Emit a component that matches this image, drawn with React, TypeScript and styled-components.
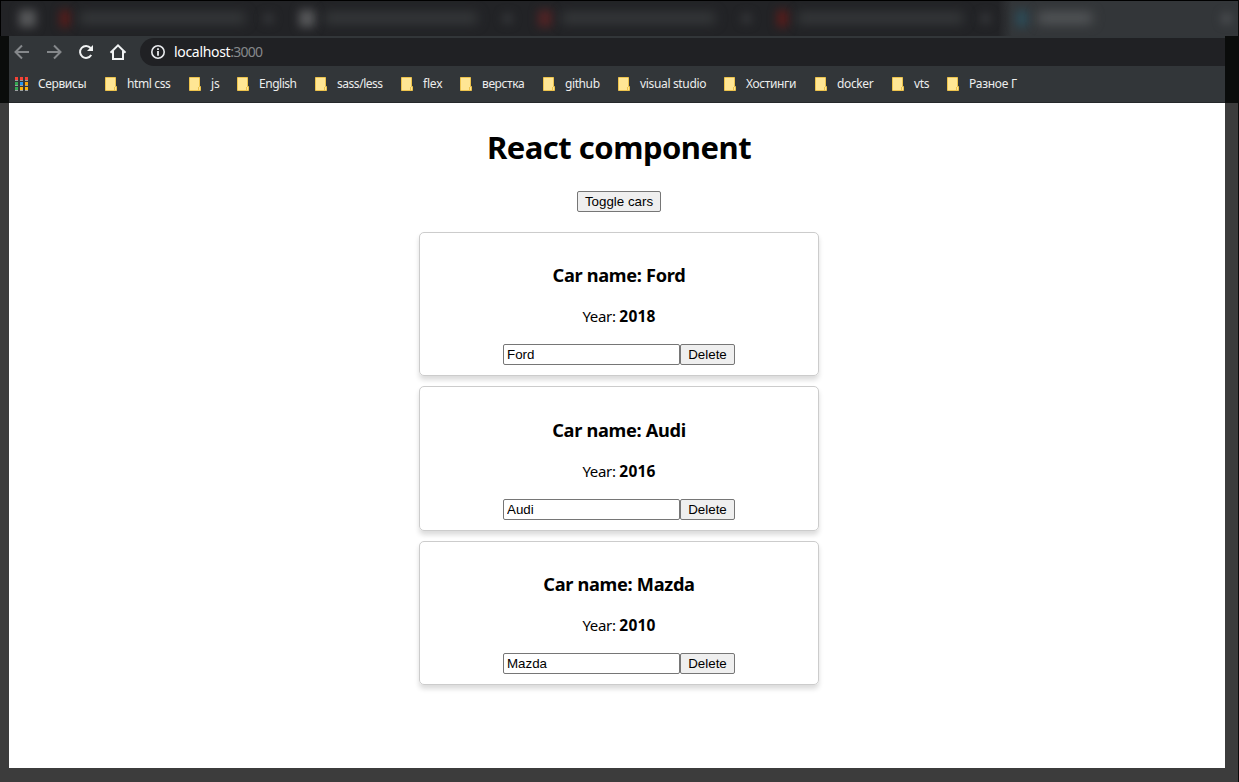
import React, { useState } from 'react';
import styled, { createGlobalStyle } from 'styled-components';

const Global = createGlobalStyle`
  * { box-sizing: border-box; }
  html, body { margin: 0; padding: 0; overflow: hidden; }
  body { background: #3b3b3b; }
`;

const Screen = styled.div`
  width: 1239px;
  height: 782px;
  display: flex;
  flex-direction: column;
  background: #3c3c3c;
  border-right: 1px solid #0a0a0a;
  overflow: hidden;
`;

const TabStrip = styled.div`
  height: 36px;
  flex: none;
  display: flex;
  background: #222326;
  border-top: 1px solid #000;
  border-left: 1px solid #000;
  overflow: hidden;
  margin-right: -1px;
`;

const Tab = styled.div<{ $width: number; $active?: boolean }>`
  width: ${p => p.$width}px;
  flex: none;
  height: 36px;
  display: flex;
  align-items: center;
  padding: 0 8px 2px 18px;
  background: ${p => (p.$active ? 'linear-gradient(90deg, #222326 0, #333639 14px)' : 'transparent')};
`;

const Favicon = styled.div<{ $color: string; $width: number }>`
  width: ${p => p.$width}px;
  height: 17px;
  flex: none;
  background: ${p => p.$color};
  filter: blur(5px);
`;

const TitleBlur = styled.div<{ $width: number; $color: string }>`
  width: ${p => p.$width}px;
  height: 10px;
  flex: none;
  margin-left: 10px;
  background: ${p => p.$color};
  filter: blur(6px);
`;

const CloseBlur = styled.div<{ $active?: boolean }>`
  width: 9px;
  height: 9px;
  margin-left: auto;
  background: ${p => (p.$active ? '#515457' : '#383a3d')};
  filter: blur(5px);
`;

const ChromeRow = styled.div`
  flex: none;
  height: 67px;
  display: flex;
  background: #0a0c0b;
  padding: 0 13px 0 9px;
`;

const Chrome = styled.div`
  flex: 1;
  min-width: 0;
  background: #323639;
  border-bottom: 1px solid #25282b;
  font-family: 'Noto Sans', 'Open Sans', sans-serif;
`;

const Toolbar = styled.div`
  height: 32px;
  display: flex;
  align-items: center;
  padding-left: 3px;
`;

const NavButton = styled.span`
  width: 32px;
  height: 20px;
  display: flex;
  align-items: center;
  flex: none;
`;

const AddressBar = styled.div`
  flex: 1;
  height: 28px;
  border-radius: 14px 0 0 14px;
  background: #202124;
  display: flex;
  align-items: center;
  padding-left: 10px;
  color: #fff;
  font-size: 14px;
`;

const Url = styled.span`
  margin-left: 8px;
  line-height: 20px;
  letter-spacing: -0.32px;
`;

const Port = styled.span`
  color: #85888b;
  letter-spacing: -0.75px;
`;

const Bookmarks = styled.div`
  height: 32px;
  display: flex;
  align-items: center;
  padding-left: 6px;
`;

const Bookmark = styled.div<{ $width: number }>`
  width: ${p => p.$width}px;
  flex: none;
  display: flex;
  align-items: center;
  gap: 10px;
  color: #eceded;
  font-size: 12px;
  line-height: 18px;
  white-space: nowrap;
`;

const BookmarkText = styled.span<{ $spacing: number }>`
  letter-spacing: ${p => p.$spacing}px;
`;

const Page = styled.main`
  flex: none;
  width: 1216px;
  height: 665px;
  margin-left: 9px;
  padding: 0 0 0 4px;
  background: #fff;
  display: flex;
  flex-direction: column;
  align-items: center;
  color: #000;
  font-family: 'Noto Sans', 'Open Sans', sans-serif;
`;

const Heading = styled.h1`
  margin: 23px 0 22px;
  font-size: 31px;
  line-height: 43px;
  font-weight: 700;
  letter-spacing: -0.5px;
`;

const Button = styled.button<{ $width: number }>`
  width: ${p => p.$width}px;
  height: 21px;
  flex: none;
  padding: 0;
  border: 1px solid #767676;
  border-radius: 2px;
  background: #efefef;
  color: #000;
  font: 13.333px/17px 'Liberation Sans', Arial, sans-serif;
`;

const CardList = styled.div`
  margin-top: 20px;
  display: flex;
  flex-direction: column;
  gap: 10px;
`;

const Card = styled.section`
  width: 400px;
  height: 144.4px;
  padding: 29.15px 10px 10px;
  border: 1px solid #ccc;
  border-radius: 5px;
  box-shadow: 0 4px 5px 0 rgba(0, 0, 0, 0.14);
  display: flex;
  flex-direction: column;
  align-items: center;
`;

const CarName = styled.h3`
  margin: 0;
  font-size: 18.2px;
  line-height: 26px;
  font-weight: 700;
  letter-spacing: -0.31px;
`;

const Year = styled.p`
  margin: 18px 0 17px;
  font-size: 15px;
  line-height: 21px;
  letter-spacing: -0.3px;

  strong {
    font-size: 15.5px;
    line-height: 20px;
    letter-spacing: 0.2px;
  }
`;

const Controls = styled.div`
  display: flex;
`;

const NameInput = styled.input`
  width: 177px;
  height: 21px;
  padding: 1px 3px;
  border: 1px solid #767676;
  border-radius: 2px;
  background: #fff;
  color: #000;
  outline: none;
  font: 13.333px 'Liberation Sans', Arial, sans-serif;
`;

const Arrow = ({ flip }: { flip?: boolean }) => (
  <svg width="20" height="20" viewBox="0 0 20 20" fill="none" stroke="#85888b" strokeWidth="2">
    <path d={flip ? 'M3 10H16M10 3.5L16.5 10L10 16.5' : 'M17 10H4M10 3.5L3.5 10L10 16.5'} />
  </svg>
);

const Reload = () => (
  <svg width="20" height="20" viewBox="0 0 20 20">
    <path d="M15.2 13A6 6 0 1 1 14.6 6" fill="none" stroke="#f1f3f4" strokeWidth="2" />
    <path d="M17 3V9H11Z" fill="#f1f3f4" />
  </svg>
);

const Home = () => (
  <svg width="20" height="20" viewBox="0 0 20 20" fill="none" stroke="#f1f3f4" strokeWidth="2">
    <path d="M2.5 10.8L10 3.4L17.5 10.8M5 9V17H15V9" />
  </svg>
);

const Info = () => (
  <svg width="16" height="16" viewBox="0 0 16 16">
    <circle cx="8" cy="8" r="6.2" fill="none" stroke="#e8eaed" strokeWidth="1.6" />
    <path d="M7.1 4.2H8.9V5.9H7.1ZM7.1 7.1H8.9V11.8H7.1Z" fill="#e8eaed" />
  </svg>
);

const Folder = () => (
  <svg width="12" height="14" viewBox="0 0 12 14">
    <path d="M.5 .5H10.5V9.5H11.5V13.5H.5Z" fill="#ffe694" stroke="#edc34c" />
    <path d="M9.5 13V10" stroke="#edc34c" />
  </svg>
);

const appColors = ['#f44336', '#f44336', '#f44336', '#34a853', '#2196f3', '#f6a30b', '#34a853', '#fbb20b', '#fbb20b'];

const Apps = () => (
  <svg width="13" height="14" viewBox="0 0 13 14" shapeRendering="crispEdges">
    {appColors.map((c, i) => (
      <g key={i}>
        <rect x={(i % 3) * 5} y={Math.floor(i / 3) * 5} width="3" height="4" fill={c} />
        <rect x={(i % 3) * 5} y={Math.floor(i / 3) * 5 + 3} width="3" height="1" fill="#9b9fa1" />
      </g>
    ))}
  </svg>
);

const tabs = [
  { width: 41, icon: '#57585a', iconWidth: 17, title: 0, color: '#333' },
  { width: 239, icon: '#591c1a', iconWidth: 10, title: 165, color: '#393c3e' },
  { width: 239, icon: '#57585a', iconWidth: 16, title: 152, color: '#393c3e' },
  { width: 239, icon: '#512325', iconWidth: 14, title: 153, color: '#393c3e' },
  { width: 239, icon: '#591c1a', iconWidth: 11, title: 165, color: '#393c3e' },
  { width: 241, icon: '#2c4b57', iconWidth: 12, title: 54, color: '#595c5e', active: true },
];

const bookmarks = [
  { label: 'html css', width: 84, spacing: -0.37 },
  { label: 'js', width: 48, spacing: -0.2 },
  { label: 'English', width: 78, spacing: -0.48 },
  { label: 'sass/less', width: 86, spacing: -0.46 },
  { label: 'flex', width: 59, spacing: -0.2 },
  { label: 'верстка', width: 83, spacing: -0.38 },
  { label: 'github', width: 75, spacing: -0.4 },
  { label: 'visual studio', width: 106, spacing: -0.34 },
  { label: 'Хостинги', width: 91, spacing: -0.36 },
  { label: 'docker', width: 77, spacing: -0.37 },
  { label: 'vts', width: 55, spacing: -0.3 },
  { label: 'Разное Г', width: 80, spacing: -0.25 },
];

const initialCars = [
  { id: 1, name: 'Ford', year: 2018 },
  { id: 2, name: 'Audi', year: 2016 },
  { id: 3, name: 'Mazda', year: 2010 },
];

export default function App() {
  const [cars, setCars] = useState(initialCars);
  const [visible, setVisible] = useState(true);
  const rename = (id: number, name: string) => setCars(cars.map(c => (c.id === id ? { ...c, name } : c)));

  return (
    <>
      <Global />
      <Screen>
        <TabStrip>
          {tabs.map((t, i) => (
            <Tab key={i} $width={t.width} $active={t.active}>
              <Favicon $color={t.icon} $width={t.iconWidth} />
              {t.title > 0 && <TitleBlur $width={t.title} $color={t.color} />}
              {t.title > 0 && <CloseBlur $active={t.active} />}
            </Tab>
          ))}
        </TabStrip>
        <ChromeRow>
          <Chrome>
            <Toolbar>
              <NavButton><Arrow /></NavButton>
              <NavButton><Arrow flip /></NavButton>
              <NavButton><Reload /></NavButton>
              <NavButton><Home /></NavButton>
              <AddressBar>
                <Info />
                <Url>localhost<Port>:3000</Port></Url>
              </AddressBar>
            </Toolbar>
            <Bookmarks>
              <Bookmark $width={90}><Apps /><BookmarkText $spacing={-0.38}>Сервисы</BookmarkText></Bookmark>
              {bookmarks.map(b => (
                <Bookmark key={b.label} $width={b.width}>
                  <Folder />
                  <BookmarkText $spacing={b.spacing}>{b.label}</BookmarkText>
                </Bookmark>
              ))}
            </Bookmarks>
          </Chrome>
        </ChromeRow>
        <Page>
          <Heading>React component</Heading>
          <Button $width={84} onClick={() => setVisible(!visible)}>Toggle cars</Button>
          {visible && (
            <CardList>
              {cars.map(car => (
                <Card key={car.id}>
                  <CarName>Car name: {car.name}</CarName>
                  <Year>Year: <strong>{car.year}</strong></Year>
                  <Controls>
                    <NameInput value={car.name} onChange={e => rename(car.id, e.target.value)} />
                    <Button $width={55} onClick={() => setCars(cars.filter(c => c.id !== car.id))}>Delete</Button>
                  </Controls>
                </Card>
              ))}
            </CardList>
          )}
        </Page>
      </Screen>
    </>
  );
}
